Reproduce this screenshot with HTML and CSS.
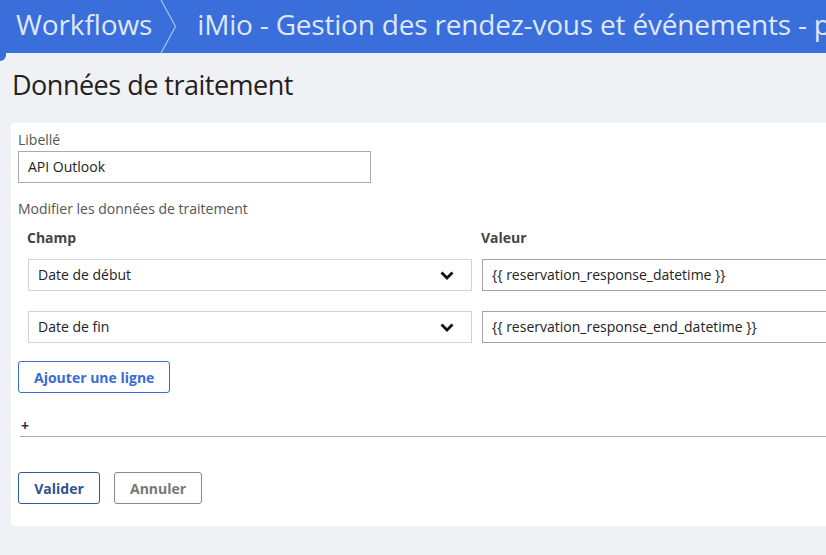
FILE: index.html
```html
<!DOCTYPE html>
<html lang="fr">
<head>
<meta charset="utf-8">
<title>Données de traitement</title>
<link rel="stylesheet" href="styles.css">
</head>
<body>
<header class="topbar">
  <a class="crumb" href="#">Workflows</a>
  <svg class="crumb-sep" width="18" height="53" viewBox="0 0 18 53"><polyline points="1,0 15.5,26.5 1,53" fill="none" stroke="#a9c2f3" stroke-width="1.2"/></svg>
  <a class="crumb last" href="#">iMio - Gestion des rendez-vous et événements - prise de rendez-vous</a>
</header>
<span class="corner"></span>
<main class="content">
  <h1 class="page-title">Données de traitement</h1>
  <form class="card">
    <label class="field-label">Libellé</label>
    <div class="text-input short">API Outlook</div>

    <div class="field-label spaced">Modifier les données de traitement</div>
    <div class="grid">
      <div class="col-head">Champ</div>
      <div class="col-head">Valeur</div>

      <div class="select">Date de début
        <svg class="chev" width="14" height="9" viewBox="0 0 14 9"><polyline points="1.5,1.5 7,7 12.5,1.5" fill="none" stroke="#111" stroke-width="2.8"/></svg>
      </div>
      <div class="text-input value">{{ reservation_response_datetime }}</div>

      <div class="select">Date de fin
        <svg class="chev" width="14" height="9" viewBox="0 0 14 9"><polyline points="1.5,1.5 7,7 12.5,1.5" fill="none" stroke="#111" stroke-width="2.8"/></svg>
      </div>
      <div class="text-input value">{{ reservation_response_end_datetime }}</div>
    </div>

    <button type="button" class="btn btn-add">Ajouter une ligne</button>

    <div class="plus-row">+</div>

    <div class="actions">
      <button type="button" class="btn btn-submit">Valider</button>
      <button type="button" class="btn btn-cancel">Annuler</button>
    </div>
  </form>
</main>
</body>
</html>
```

FILE: styles.css
```css
html, body {
  margin: 0;
  padding: 0;
}
body {
  width: 826px;
  height: 555px;
  overflow: hidden;
  background: #f0f1f4;
  font-family: "Open Sans", "DejaVu Sans", sans-serif;
  color: #222;
  position: relative;
}
.topbar {
  height: 53px;
  background: #396edb;
  display: flex;
  align-items: center;
  padding-left: 16px;
  white-space: nowrap;
  overflow: hidden;
}
.crumb {
  flex: none;
  color: #dfe8fb;
  text-decoration: none;
  font-size: 28px;
  line-height: 53px;
  position: relative;
  top: -2px;
  letter-spacing: -0.1px;
}
.crumb.last {
  letter-spacing: -0.2px;
}
.crumb-sep {
  flex: none;
  margin: 0 19px 0 8px;
  align-self: stretch;
}
.corner {
  position: absolute;
  left: 0;
  top: 53px;
  width: 6px;
  height: 8px;
  background: #396edb;
  border-bottom-right-radius: 6px;
}
.content {
  padding: 13px 0 0 11px;
}
.page-title {
  margin: 0 0 19px 1px;
  font-size: 27px;
  line-height: 38px;
  font-weight: 400;
  color: #222;
  letter-spacing: -0.5px;
}
.card {
  background: #fff;
  width: 1000px;
  border-radius: 4px;
  padding: 7px 7px 22px 7px;
  display: flex;
  flex-direction: column;
  align-items: flex-start;
}
.field-label {
  display: block;
  font-size: 14px;
  line-height: 20px;
  color: #555;
  margin-bottom: 1px;
}
.field-label.spaced {
  margin-top: 16px;
  margin-bottom: 9px;
}
.text-input {
  box-sizing: border-box;
  height: 32px;
  border: 1px solid #aaa;
  font-size: 14px;
  line-height: 30px;
  padding: 0 9px;
  color: #222;
  background: #fff;
  white-space: nowrap;
}
.text-input.short {
  width: 353px;
}
.grid {
  display: grid;
  grid-template-columns: 444px 444px;
  column-gap: 10px;
  row-gap: 20px;
  padding-left: 10px;
}
.col-head {
  font-size: 14px;
  font-weight: 700;
  line-height: 20px;
  color: #444;
  margin-left: -1px;
  margin-bottom: -9px;
}
.select {
  box-sizing: border-box;
  height: 32px;
  border: 1px solid #d2d2d2;
  font-size: 14px;
  line-height: 30px;
  padding: 0 9px;
  color: #222;
  display: flex;
  align-items: center;
  justify-content: space-between;
}
.chev {
  margin-right: 8px;
}
.text-input.value {
  border-color: #a4a4a4;
}
.btn {
  box-sizing: border-box;
  height: 32px;
  font-family: "Open Sans", "DejaVu Sans", sans-serif;
  font-size: 14px;
  font-weight: 700;
  background: #fff;
  border-radius: 3px;
  padding: 0 15px;
  white-space: nowrap;
  cursor: pointer;
}
.btn-add {
  margin-top: 18px;
  border: 1px solid #3d6bd2;
  color: #3c6ad5;
  min-width: 152px;
}
.plus-row {
  align-self: stretch;
  margin: 24px 0 0 2px;
  font-size: 14px;
  font-weight: 700;
  line-height: 18px;
  height: 19px;
  color: #333;
  padding-left: 1px;
  border-bottom: 1px solid #a9a9a9;
}
.actions {
  margin-top: 35px;
  display: flex;
  gap: 14px;
}
.btn-submit {
  border: 1px solid #2d5b98;
  color: #2c538f;
  min-width: 82px;
}
.btn-cancel {
  border: 1px solid #888;
  color: #777;
  min-width: 87px;
}
```
